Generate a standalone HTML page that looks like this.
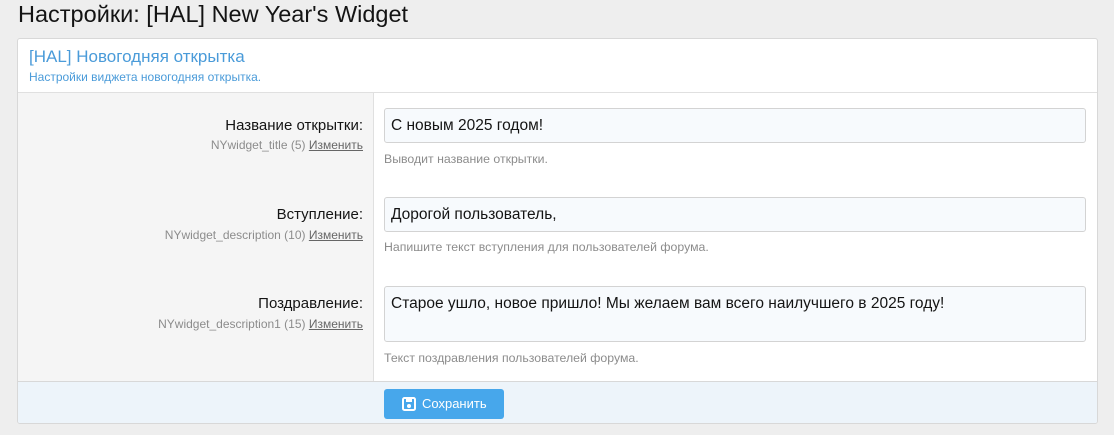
<!DOCTYPE html><html><head><meta charset="utf-8"><style>
body{margin:0;background:#eee;font-family:"Liberation Sans","Noto Sans CJK SC",sans-serif;width:1114px;height:435px;overflow:hidden;position:relative;color:#141414}
.a{position:absolute;white-space:nowrap}
h1{position:absolute;left:18px;top:0;margin:0;font-weight:400;font-size:23.5px;line-height:28px;color:#141414}
.blk{position:absolute;left:17px;top:38px;width:1079px;height:384px;background:#fff;border:1px solid #d8d8d8;border-radius:3px;overflow:hidden}
.hd{position:absolute;left:0;top:0;right:0;height:53px;border-bottom:1px solid #e0e0e0}
.lc{position:absolute;left:0;top:54px;width:355px;height:288px;background:#f5f5f5;border-right:1px solid #e0e0e0}
.ft{position:absolute;left:0;top:342px;right:0;height:42px;background:#edf4fa;border-top:1px solid #d8d8d8}
.inp{position:absolute;left:366px;width:702px;background:#f7fafd;border:1px solid #d3d3d3;border-radius:3px;font-size:15.5px;box-sizing:border-box;padding:8px 6px}
.lbl{right:734px;text-align:right;font-size:15px}
.sub{right:734px;font-size:12px;color:#8c8c8c}
.sub u{color:#666}
.d{left:366px;font-size:12.3px;color:#8c8c8c}
.btn{position:absolute;left:366px;top:7px;width:120px;height:30px;background:#47a7eb;border-radius:3px;color:#fff;font-size:13px;line-height:30px}
</style></head><body>
<h1>Настройки: [HAL] New Year's Widget</h1>
<div class="blk">
<div class="hd"><div class="a" style="left:11px;top:8px;font-size:17px;color:#4a9bd9">[HAL] Новогодняя открытка</div><div class="a" style="left:11px;top:31px;font-size:12px;color:#4a9bd9">Настройки виджета новогодняя открытка.</div></div>
<div class="lc"></div>
<div class="a lbl" style="top:78px">Название открытки:</div>
<div class="a sub" style="top:99px">NYwidget_title (5) <u>Изменить</u></div>
<div class="inp" style="top:69px;height:35px">С новым 2025 годом!</div>
<div class="a d" style="top:113px">Выводит название открытки.</div>
<div class="a lbl" style="top:167px">Вступление:</div>
<div class="a sub" style="top:189px">NYwidget_description (10) <u>Изменить</u></div>
<div class="inp" style="top:158px;height:35px">Дорогой пользователь,</div>
<div class="a d" style="top:201px">Напишите текст вступления для пользователей форума.</div>
<div class="a lbl" style="top:256px">Поздравление:</div>
<div class="a sub" style="top:278px">NYwidget_description1 (15) <u>Изменить</u></div>
<div class="inp" style="top:247px;height:56px">Старое ушло, новое пришло! Мы желаем вам всего наилучшего в 2025 году!</div>
<div class="a d" style="top:312px">Текст поздравления пользователей форума.</div>
<div class="ft"><div class="btn"><svg style="position:absolute;left:18px;top:8px" width="14" height="14" viewBox="0 0 14 14"><rect x="1" y="1" width="12" height="12" rx="1.5" fill="none" stroke="#fff" stroke-width="2"/><rect x="4" y="1" width="6" height="4" fill="#fff"/><circle cx="7" cy="9" r="2" fill="#fff"/></svg><span style="position:absolute;left:38px">Сохранить</span></div></div>
</div>
</body></html>
